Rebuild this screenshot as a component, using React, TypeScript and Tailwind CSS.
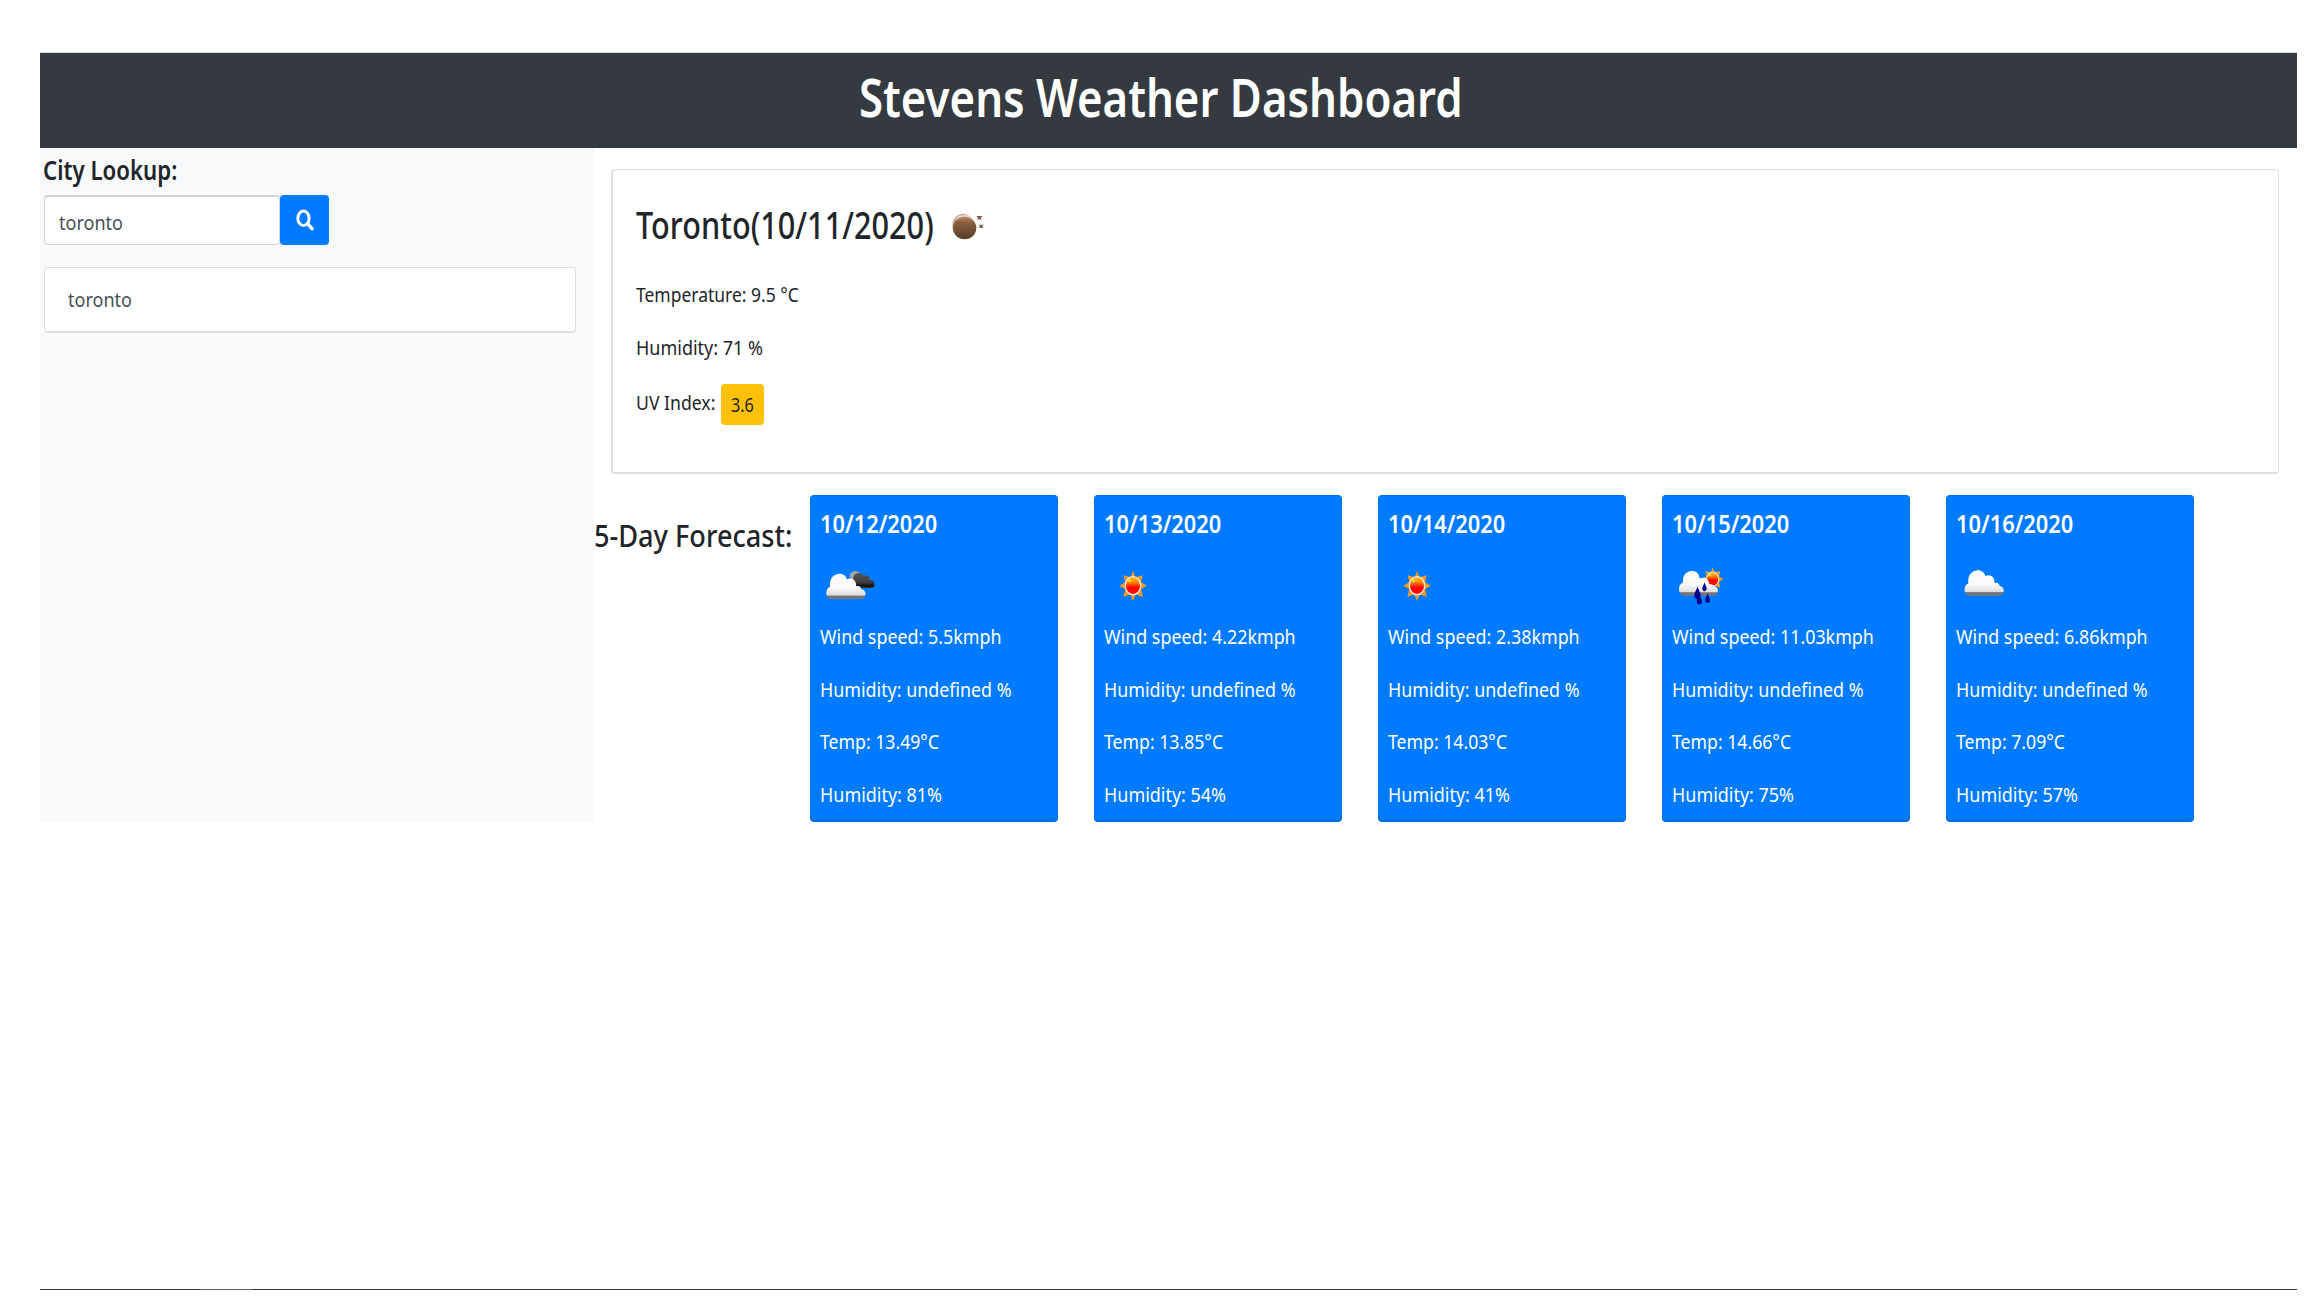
import type { ReactNode } from 'react';

type IconName = 'broken' | 'sun' | 'rain' | 'cloud';

type Day = { date: string; icon: IconName; wind: string; temp: string; humidity: string };

const days: Day[] = [
  { date: '10/12/2020', icon: 'broken', wind: '5.5', temp: '13.49', humidity: '81' },
  { date: '10/13/2020', icon: 'sun', wind: '4.22', temp: '13.85', humidity: '54' },
  { date: '10/14/2020', icon: 'sun', wind: '2.38', temp: '14.03', humidity: '41' },
  { date: '10/15/2020', icon: 'rain', wind: '11.03', temp: '14.66', humidity: '75' },
  { date: '10/16/2020', icon: 'cloud', wind: '6.86', temp: '7.09', humidity: '57' },
];

const CLOUD =
  'M68 117C49 117 46 88 63 80C60 56 74 41 92 41C105 41 111 49 114 58C128 50 144 62 141 79C150 76 157 82 157 88C174 89 174 117 155 117Z';

/* Condensed single line of text. */
function Line({ className = '', children }: { className?: string; children: ReactNode }) {
  return <div className={`origin-left whitespace-nowrap ${className}`}>{children}</div>;
}

function Gradients() {
  return (
    <defs>
      <linearGradient id="cloudFill" x1="0" y1="0" x2="0" y2="1">
        <stop offset="0" stopColor="#ffffff" />
        <stop offset="0.55" stopColor="#fafafa" />
        <stop offset="0.85" stopColor="#dedede" />
        <stop offset="0.88" stopColor="#6f6f6f" />
        <stop offset="1" stopColor="#7d7d7d" />
      </linearGradient>
      <linearGradient id="darkFill" x1="0" y1="0" x2="0" y2="1">
        <stop offset="0" stopColor="#5a5a5a" />
        <stop offset="0.65" stopColor="#3c3c3c" />
        <stop offset="0.85" stopColor="#111111" />
        <stop offset="1" stopColor="#333333" />
      </linearGradient>
      <linearGradient id="sunFill" x1="0" y1="0" x2="0" y2="1">
        <stop offset="0" stopColor="#ffc21a" />
        <stop offset="0.3" stopColor="#ff8a00" />
        <stop offset="0.45" stopColor="#ff4a00" />
        <stop offset="0.6" stopColor="#ff0000" />
        <stop offset="1" stopColor="#fa0a00" />
      </linearGradient>
      <linearGradient id="moonFill" x1="0" y1="0" x2="0" y2="1">
        <stop offset="0" stopColor="#b98a68" />
        <stop offset="0.25" stopColor="#8a5f40" />
        <stop offset="1" stopColor="#573c28" />
      </linearGradient>
    </defs>
  );
}

function Sun({ transform }: { transform?: string }) {
  return (
    <g transform={transform}>
      <path
        fill="#f59a1c"
        d="M72 32L79 52L101 46L96 66L113 77L96 88L102 111L80 103L72 124L64 103L43 111L49 88L31 77L49 66L44 46L65 52Z"
      />
      <ellipse cx="72" cy="77" rx="23" ry="27" fill="url(#sunFill)" stroke="#ffe9cf" strokeWidth="4" />
      <ellipse cx="62" cy="62" rx="5" ry="5" fill="#ffe23c" opacity="0.8" />
    </g>
  );
}

function Drop({ x, y, w, h }: { x: number; y: number; w: number; h: number }) {
  return (
    <path
      fill="#00008c"
      transform={`translate(${x} ${y}) scale(${w} ${h})`}
      d="M0.5 0C0.6 0.3 1 0.45 1 0.72C1 1.09 0 1.09 0 0.72C0 0.45 0.4 0.3 0.5 0Z"
    />
  );
}

function WeatherIcon({ name }: { name: IconName }) {
  const view = {
    broken: '33 0 210 150',
    sun: '-15 0 210 150',
    rain: '9 0 210 150',
    cloud: '0 0 210 150',
  }[name];
  return (
    <svg className="mt-[20px] mb-[11px] block h-[50px] w-[70px]" viewBox={view}>
      <Gradients />
      {name === 'broken' && (
        <>
          <ellipse cx="139" cy="49" rx="17" ry="16" fill="#a5a5a5" />
          <path
            fill="url(#darkFill)"
            d="M140 84C124 82 125 60 133 58C130 36 160 34 164 47C176 42 183 50 182 60C200 59 202 84 187 84Z"
          />
          <path fill="url(#cloudFill)" d={CLOUD} />
        </>
      )}
      {name === 'sun' && <Sun />}
      {name === 'rain' && (
        <>
          <Sun transform="translate(75 -3) scale(0.78)" />
          <path
            fill="url(#cloudFill)"
            d="M50 107C24 107 26 72 42 68C40 45 52 33 70 33C84 33 90 42 92 56C104 48 120 56 121 74C128 71 134 75 135 79C151 80 151 107 134 107Z"
          />
          <Drop x={76} y={78} w={19} h={40} />
          <Drop x={100} y={67} w={13} h={27} />
          <Drop x={83} y={105} w={16} h={28} />
          <Drop x={109} y={99} w={14} h={30} />
        </>
      )}
      {name === 'cloud' && (
        <path fill="url(#cloudFill)" transform="translate(-26 -10)" d={CLOUD} />
      )}
    </svg>
  );
}

function MoonIcon() {
  return (
    <svg className="mt-[2px] h-[50px] w-[40px]" viewBox="30 0 120 150">
      <Gradients />
      <ellipse cx="69" cy="77" rx="32" ry="36" fill="#c9a78e" />
      <ellipse cx="72" cy="60" rx="24" ry="16" fill="#e8d5c6" />
      <ellipse cx="74" cy="84" rx="35" ry="34" fill="url(#moonFill)" />
      <path fill="#7a5b49" d="M109 48H128L122 53L125 61L118 57L111 61L114 53ZM115 74H132L127 78L130 84H117L120 78Z" />
    </svg>
  );
}

function SearchIcon() {
  return (
    <svg className="h-[22px] w-[18px]" viewBox="0 0 18 22" fill="none" stroke="#fff">
      <ellipse cx="7.5" cy="9.3" rx="5.6" ry="7.3" strokeWidth="3" />
      <path d="M11.8 14.8L16 19.6" strokeWidth="3.4" strokeLinecap="round" />
    </svg>
  );
}

function ForecastCard({ day }: { day: Day }) {
  return (
    <div className="h-[327px] w-[248px] shrink-0 rounded-[4px] border border-b-2 border-[#006fe6] bg-[#007bff] pt-[10px] pl-[9px] text-[20.5px] leading-[31px] text-white">
      <Line className="scale-x-[0.873] text-[25px] leading-[34px] font-semibold">{day.date}</Line>
      <WeatherIcon name={day.icon} />
      <div className="flex flex-col gap-[21.7px]">
        <Line className="scale-x-[0.871]">Wind speed: {day.wind}kmph</Line>
        <Line className="scale-x-[0.871]">Humidity: undefined %</Line>
        <Line className="scale-x-[0.861]">Temp: {day.temp}°C</Line>
        <Line className="scale-x-[0.875]">Humidity: {day.humidity}%</Line>
      </div>
    </div>
  );
}

export default function App() {
  return (
    <div className="flex h-[1296px] w-[2304px] flex-col overflow-hidden bg-white pt-[52px] pl-[40px] font-['Noto_Sans','Open_Sans',sans-serif] text-[20.5px] leading-[31px] text-[#212529]">
      <header className="h-[96px] w-[2257px] border-t border-[#d5d7d9] bg-[#343a40] pt-[1px] pl-[819px]">
        <Line className="scale-x-[0.842] text-[52px] leading-[86px] font-semibold text-white">
          Stevens Weather Dashboard
        </Line>
      </header>

      <div className="flex">
        <aside className="h-[674px] w-[554px] shrink-0 bg-[#f8f9fa] pt-[5px] pl-[3px]">
          <Line className="scale-x-[0.842] text-[26.4px] leading-[34px] font-semibold">City Lookup:</Line>
          <div className="mt-[8px] ml-[1px] flex h-[50px]">
            <div className="w-[236px] rounded-[4px] border border-t-2 border-[#ced4da] bg-white pt-[10px] pl-[14px] text-[#495057]">
              <Line className="scale-x-[0.88]">toronto</Line>
            </div>
            <div className="flex w-[49px] items-center justify-center rounded-[4px] bg-[#007bff] pb-[1px]">
              <SearchIcon />
            </div>
          </div>
          <div className="mt-[22px] ml-[1px] h-[66px] w-[532px] rounded-[4px] border border-b-2 border-[#dfdfdf] bg-white pt-[16px] pl-[23px] text-[#495057]">
            <Line className="scale-x-[0.88]">toronto</Line>
          </div>
        </aside>

        <main className="flex flex-col">
          <section className="mt-[21px] ml-[17px] h-[305px] w-[1668px] rounded-[4px] border border-b-2 border-l-2 border-[#dfdfdf] pt-[28px] pl-[23px]">
            <div className="flex h-[52px]">
              <Line className="w-[314px] scale-x-[0.807] text-[38px] leading-[52px] font-medium">
                Toronto(10/11/2020)
              </Line>
              <MoonIcon />
            </div>
            <Line className="mt-[29px] scale-x-[0.852]">Temperature: 9.5 °C</Line>
            <Line className="mt-[22px] scale-x-[0.877]">Humidity: 71 %</Line>
            <div className="mt-[21px] flex h-[41px]">
              <Line className="mt-[3px] w-[85px] scale-x-[0.86]">UV Index:</Line>
              <div className="w-[43px] rounded-[4px] bg-[#ffc107] pl-[10px]">
                <Line className="scale-x-[0.83] text-[19.5px] leading-[41px]">3.6</Line>
              </div>
            </div>
          </section>

          <section className="mt-[21px] flex">
            <Line className="mt-[21px] w-[216px] scale-x-[0.905] text-[30px] leading-[40px] font-medium">
              5-Day Forecast:
            </Line>
            <div className="flex gap-[36px]">
              {days.map((day) => (
                <ForecastCard key={day.date} day={day} />
              ))}
            </div>
          </section>
        </main>
      </div>

      <footer className="mt-[467px] flex h-px w-[2257px] bg-[#3a3a3a]">
        <span className="ml-[160px] h-px w-[52px] bg-[#666666]" />
      </footer>
    </div>
  );
}
